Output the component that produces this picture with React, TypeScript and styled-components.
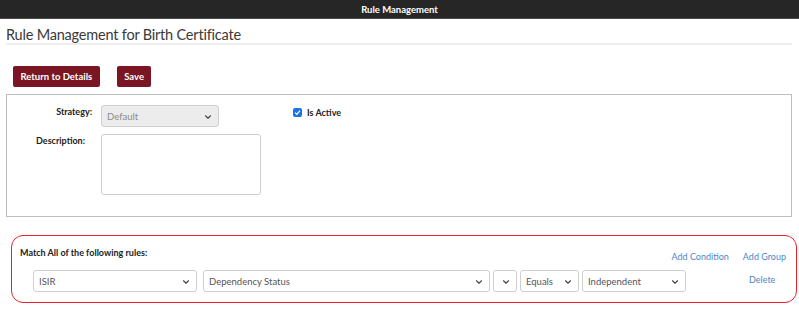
import styled, { createGlobalStyle } from 'styled-components';
import { ChevronDown } from 'lucide-react';

const GlobalStyle = createGlobalStyle`
  html, body {
    margin: 0;
    padding: 0;
    background: #fff;
    font-family: Lato, "Open Sans", Arial, sans-serif;
    color: #333;
  }
`;

const Page = styled.div`
  width: 799px;
  height: 312px;
  overflow: hidden;
`;

const TopBar = styled.div`
  height: 18px;
  background: #262626;
  border-bottom: 1px solid #4a4a4a;
  display: flex;
  align-items: center;
  justify-content: center;
  color: #fff;
  font-size: 9.5px;
  font-weight: 700;
`;

const Content = styled.div`
  padding: 0 7px 0 6px;
`;

const Title = styled.h1`
  margin: 0;
  padding-top: 7px;
  font-size: 14.5px;
  font-weight: 400;
  line-height: 17px;
  letter-spacing: -0.2px;
  color: #3a3a3a;
  border-bottom: 2px solid #eeeeee;
  padding-bottom: 0;
`;

const ButtonBar = styled.div`
  display: flex;
  gap: 17px;
  padding: 21px 0 0 7px;
`;

const Button = styled.button`
  height: 21px;
  padding: 0 7.5px;
  border: none;
  border-radius: 2px;
  background: #7a1623;
  color: #fff;
  font-family: Lato, "Open Sans", Arial, sans-serif;
  font-size: 9.5px;
  font-weight: 700;
  cursor: pointer;
`;

const Panel = styled.div`
  margin-top: 7px;
  height: 123px;
  border: 1px solid #bdbdbd;
  display: flex;
  box-sizing: border-box;
`;

const FormCol = styled.div`
  display: flex;
  flex-direction: column;
  gap: 7px;
  padding-top: 10px;
`;

const FormRow = styled.div`
  display: flex;
  align-items: flex-start;
`;

const Label = styled.label<{ $end: number }>`
  width: ${p => p.$end}px;
  margin-right: ${p => 94 - p.$end}px;
  text-align: right;
  font-size: 9px;
  font-weight: 700;
  color: #222;
  padding-top: 1px;
`;

const SelectWrap = styled.div<{ $w: number; $disabled?: boolean; $gap?: number }>`
  position: relative;
  width: ${p => p.$w}px;
  height: 22px;
  margin-right: ${p => p.$gap ?? 0}px;
  box-sizing: border-box;
  border: 1px solid #cfcfcf;
  border-radius: 3px;
  background: ${p => (p.$disabled ? '#ececec' : '#fff')};
  display: flex;
  align-items: center;
  padding-left: 5px;
  font-size: 9.5px;
  color: ${p => (p.$disabled ? '#8a8a8a' : '#555')};
  svg {
    position: absolute;
    right: 5px;
    top: 6px;
  }
`;

const TextArea = styled.div`
  width: 160px;
  height: 61px;
  box-sizing: border-box;
  border: 1px solid #cfcfcf;
  border-radius: 3px;
`;

const ActiveCol = styled.div`
  display: flex;
  align-items: center;
  gap: 5px;
  margin-left: 32px;
  padding-top: 12px;
  height: 10px;
  font-size: 9px;
  font-weight: 700;
  color: #222;
`;

const Check = styled.span`
  width: 9px;
  height: 9px;
  border-radius: 2px;
  background: #1a73e8;
  display: flex;
  align-items: center;
  justify-content: center;
`;

const RuleBox = styled.div`
  margin: 18px -5px 0 5px;
  height: 68px;
  box-sizing: border-box;
  border: 1.5px solid #e8252a;
  border-radius: 12px;
  padding: 10px 10px 0 8px;
`;

const RuleHead = styled.div`
  display: flex;
  align-items: flex-end;
  justify-content: space-between;
  height: 16px;
`;

const RuleTitle = styled.div`
  font-size: 9px;
  font-weight: 700;
  color: #222;
  align-self: flex-start;
  padding-top: 1px;
`;

const Links = styled.div`
  display: flex;
  gap: 14px;
`;

const Link = styled.a`
  font-size: 9px;
  color: #4f86c6;
  text-decoration: none;
`;

const RuleRow = styled.div`
  display: flex;
  align-items: center;
  gap: 3px;
  margin-top: 8px;
  padding-left: 13px;
`;

const DeleteLink = styled(Link)`
  margin-left: 60px;
  margin-top: -3px;
`;

const Select = ({ w, value, disabled, gap }: { w: number; value?: string; disabled?: boolean; gap?: number }) => (
  <SelectWrap $w={w} $disabled={disabled} $gap={gap}>
    {value}
    <ChevronDown size={10} strokeWidth={2.6} color="#444" />
  </SelectWrap>
);

export default function App() {
  return (
    <Page>
      <GlobalStyle />
      <TopBar>Rule Management</TopBar>
      <Content>
        <Title>Rule Management for Birth Certificate</Title>
        <ButtonBar>
          <Button>Return to Details</Button>
          <Button>Save</Button>
        </ButtonBar>
        <Panel>
          <FormCol>
            <FormRow>
              <Label $end={85}>Strategy:</Label>
              <Select w={118} value="Default" disabled />
            </FormRow>
            <FormRow>
              <Label $end={78}>Description:</Label>
              <TextArea />
            </FormRow>
          </FormCol>
          <ActiveCol>
            <Check>
              <svg width="7" height="7" viewBox="0 0 10 10">
                <path d="M1.5 5.2 L4 7.6 L8.6 2.4" stroke="#fff" strokeWidth="1.8" fill="none" />
              </svg>
            </Check>
            Is Active
          </ActiveCol>
        </Panel>
        <RuleBox>
          <RuleHead>
            <RuleTitle>Match All of the following rules:</RuleTitle>
            <Links>
              <Link>Add Condition</Link>
              <Link>Add Group</Link>
            </Links>
          </RuleHead>
          <RuleRow>
            <Select w={164} value="ISIR" gap={3} />
            <Select w={287} value="Dependency Status" />
            <Select w={24} />
            <Select w={59} value="Equals" />
            <Select w={104} value="Independent" />
            <DeleteLink>Delete</DeleteLink>
          </RuleRow>
        </RuleBox>
      </Content>
    </Page>
  );
}
